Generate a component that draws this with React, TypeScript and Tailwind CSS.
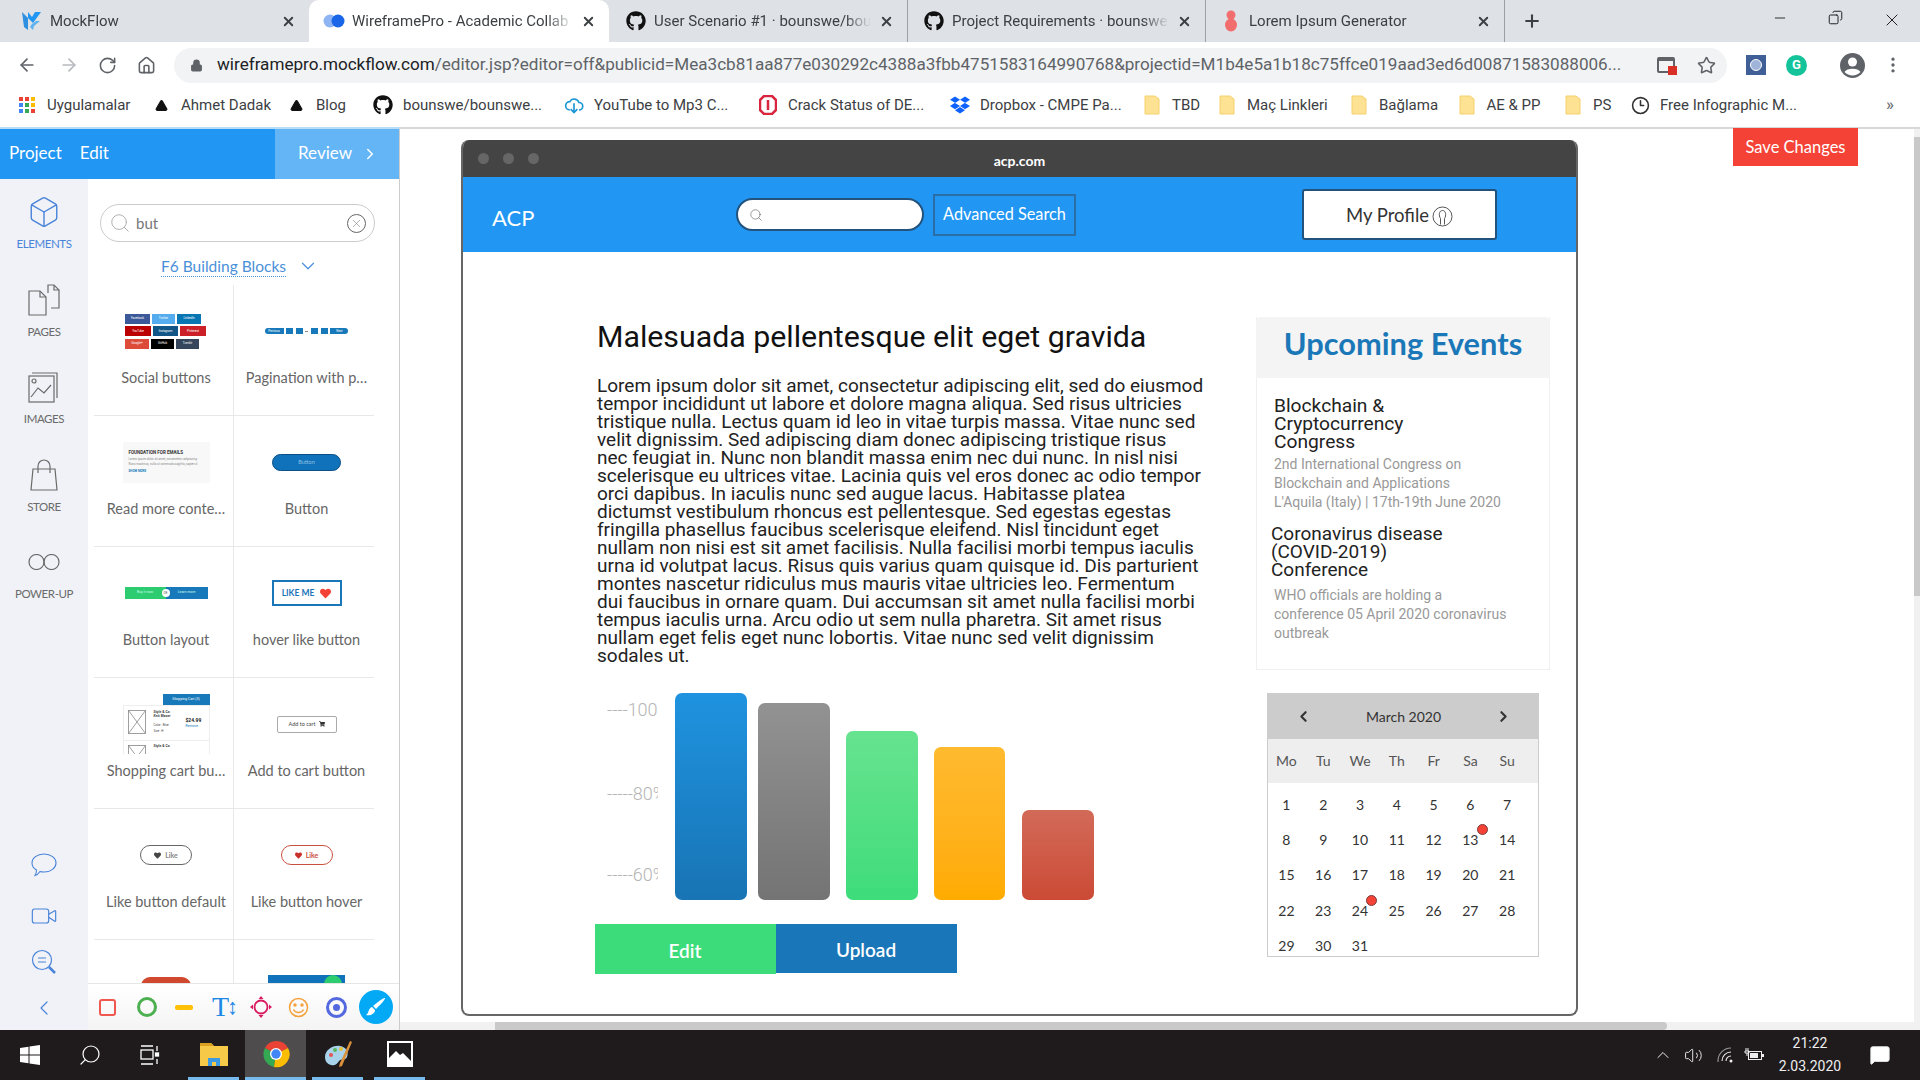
import { ReactNode } from "react";
import { FaGithub, FaDropbox, FaHeart, FaShoppingCart } from "react-icons/fa";
import {
  ArrowLeft, ArrowRight, RotateCw, Home, Lock, Star, X, Plus, Minus, ChevronRight, ChevronLeft,
  ChevronDown, ChevronUp, Search, Copy, MoreVertical, Box,
  Video, Triangle, Volume2, MessageSquare, Clock3,
} from "lucide-react";

const ui = "font-['Roboto',sans-serif]";
const soft = "font-['Lato',sans-serif]";

const LOREM = [
  "Lorem ipsum dolor sit amet, consectetur adipiscing elit, sed do eiusmod",
  "tempor incididunt ut labore et dolore magna aliqua. Sed risus ultricies",
  "tristique nulla. Lectus quam id leo in vitae turpis massa. Vitae nunc sed",
  "velit dignissim. Sed adipiscing diam donec adipiscing tristique risus",
  "nec feugiat in. Nunc non blandit massa enim nec dui nunc. In nisl nisi",
  "scelerisque eu ultrices vitae. Lacinia quis vel eros donec ac odio tempor",
  "orci dapibus. In iaculis nunc sed augue lacus. Habitasse platea",
  "dictumst vestibulum rhoncus est pellentesque. Sed egestas egestas",
  "fringilla phasellus faucibus scelerisque eleifend. Nisl tincidunt eget",
  "nullam non nisi est sit amet facilisis. Nulla facilisi morbi tempus iaculis",
  "urna id volutpat lacus. Risus quis varius quam quisque id. Dis parturient",
  "montes nascetur ridiculus mus mauris vitae ultricies leo. Fermentum",
  "dui faucibus in ornare quam. Dui accumsan sit amet nulla facilisi morbi",
  "tempus iaculis urna. Arcu odio ut sem nulla pharetra. Sit amet risus",
  "nullam eget felis eget nunc lobortis. Vitae nunc sed velit dignissim",
  "sodales ut.",
];

function MockFlowLogo() {
  return (
    <svg width="22" height="22" viewBox="0 0 22 22">
      <path d="M1 2l6 6 0 12-4-3z" fill="#2f8fe0" />
      <path d="M7 8l5 5 8-11h-6l-3 5-4-5z" fill="#2196f3" />
      <path d="M11 14l4-3h4l-6 5-1 4-3-3z" fill="#5db3f0" />
    </svg>
  );
}

function WireLogo() {
  return (
    <svg width="22" height="14" viewBox="0 0 22 14">
      <circle cx="7" cy="7" r="6.500" fill="#8fb4f4" />
      <circle cx="15" cy="7" r="6.500" fill="#1a66e8" />
    </svg>
  );
}

function LoremLogo() {
  return (
    <svg width="14" height="22" viewBox="0 0 14 22">
      <circle cx="7" cy="5" r="4.500" fill="#f26d6d" />
      <ellipse cx="7" cy="15" rx="6" ry="6.500" fill="#f26d6d" />
    </svg>
  );
}

function Tab({ icon, label, active, className }: { icon: ReactNode; label: string; active?: boolean; className: string }) {
  return (
    <div className={`relative flex h-full shrink-0 items-center pr-[13px] ${active ? "rounded-t-[10px] bg-white" : ""} ${className}`}>
      <span className="flex w-[30px] shrink-0 justify-center">{icon}</span>
      <span className="ml-[3px] min-w-0 flex-1 overflow-hidden text-[15px] whitespace-nowrap text-[#3c4043] [mask-image:linear-gradient(to_right,black_88%,transparent)]">{label}</span>
      <X size={15} strokeWidth={3} className="ml-[8px] shrink-0 text-[#3c4043]" />
    </div>
  );
}

function Folder() {
  return (
    <svg width="16" height="20" viewBox="0 0 16 20">
      <path d="M1 1h10l4 3v15H1z" fill="#fde293" stroke="#f5d06e" />
    </svg>
  );
}

function GridDots() {
  const colors = ["#ea4335", "#ea4335", "#fbbc04", "#4285f4", "#34a853", "#fbbc04", "#4285f4", "#34a853", "#ea4335"];
  return (
    <div className="grid grid-cols-3 gap-[2px]">
      {colors.map((c, i) => (
        <span key={i} className="h-[4px] w-[4px]" style={{ background: c }} />
      ))}
    </div>
  );
}

function Bookmark({ icon, label, className }: { icon: ReactNode; label: string; className: string }) {
  return (
    <div className={`flex shrink-0 items-center ${className}`}>
      <span className="flex w-[24px] shrink-0 justify-center">{icon}</span>
      <span className="ml-[8px] text-[15px] whitespace-nowrap text-[#3c4043]">{label}</span>
    </div>
  );
}

function AvatarIcon() {
  return (
    <svg width="27" height="27" viewBox="0 0 27 27">
      <circle cx="13.500" cy="13.500" r="12.500" fill="#5f6368" />
      <circle cx="13.500" cy="10" r="4.500" fill="#fff" />
      <path d="M5.500 20c2-4.500 14-4.500 16 0-4 4.500-12 4.500-16 0z" fill="#fff" />
    </svg>
  );
}

function BrowserChrome() {
  const tri = <Triangle size={13} fill="#111" stroke="#111" />;
  return (
    <div className={`h-[129px] shrink-0 ${ui}`}>
      <div className="flex h-[42px] items-end bg-[#dee1e6]">
        <div className="flex h-[42px] items-center">
          <Tab className="w-[309px] pl-[17px]" icon={<MockFlowLogo />} label="MockFlow" />
          <Tab active className="w-[300px] pl-[10px]" icon={<WireLogo />} label="WireframePro - Academic Collab" />
          <Tab className="w-[298px] pl-[12px]" icon={<FaGithub size={20} color="#111" />} label="User Scenario #1 · bounswe/boun" />
          <Tab className="w-[298px] border-l border-[#9aa0a6] pl-[11px]" icon={<FaGithub size={20} color="#111" />} label="Project Requirements · bounswe/" />
          <Tab className="w-[300px] border-x border-[#9aa0a6] pl-[10px]" icon={<LoremLogo />} label="Lorem Ipsum Generator" />
          <Plus size={20} strokeWidth={2.500} className="ml-[17px] text-[#3c4043]" />
        </div>
        <div className="ml-auto flex h-[42px] items-start pt-[10px] pr-[18px] text-[#222]">
          <Minus size={16} strokeWidth={1.400} />
          <Copy size={15} strokeWidth={1.600} className="ml-[40px] scale-x-[-1]" />
          <X size={20} strokeWidth={1.200} className="ml-[39px]" />
        </div>
      </div>

      <div className="flex h-[46px] items-center bg-white text-[#5f6368]">
        <ArrowLeft size={20} className="ml-[17px]" />
        <ArrowRight size={20} className="ml-[22px] text-[#b6b9bd]" />
        <RotateCw size={19} className="ml-[19px]" />
        <Home size={19} className="ml-[20px]" />
        <div className="ml-[18px] flex h-[35px] w-[1553px] items-center rounded-full bg-[#f1f3f4] pl-[16px]">
          <Lock size={13} fill="#5f6368" className="shrink-0" />
          <span className="ml-[14px] text-[17.100px] whitespace-nowrap text-[#5f6368]">
            <span className="text-[#202124]">wireframepro.mockflow.com</span>
            /editor.jsp?editor=off&amp;publicid=Mea3cb81aa877e030292c4388a3fbb4751583164990768&amp;projectid=M1b4e5a1b18c75ffce019aad3ed6d00871583088006...
          </span>
          <span className="ml-auto flex items-center pr-[11px]">
            <span className="relative mr-[22px] block h-[16px] w-[18px] rounded-[2px] border-2 border-t-[4px] border-[#5f6368]">
              <span className="absolute right-[-4px] bottom-[-4px] h-[9px] w-[9px] bg-[#d93025]" />
            </span>
            <Star size={19} />
          </span>
        </div>
        <span className="ml-[19px] flex h-[20px] w-[20px] items-center justify-center bg-[#3f5f96]">
          <span className="block h-[12px] w-[12px] rounded-full border border-white bg-[#9fb4d8]" />
        </span>
        <span className="ml-[20px] flex h-[21px] w-[21px] items-center justify-center rounded-full bg-[#15c39a] text-[13px] font-bold text-white">G</span>
        <span className="ml-[32px]"><AvatarIcon /></span>
        <MoreVertical size={20} className="ml-[17px]" />
      </div>

      <div className="relative flex h-[41px] items-center border-b-[2px] border-[#d8d8d8] bg-white pb-[5px] pl-[15px]">
        <Bookmark className="w-[134px]" icon={<GridDots />} label="Uygulamalar" />
        <Bookmark className="w-[135px]" icon={tri} label="Ahmet Dadak" />
        <Bookmark className="w-[87px]" icon={tri} label="Blog" />
        <Bookmark className="w-[191px]" icon={<FaGithub size={20} color="#111" />} label="bounswe/bounswe..." />
        <Bookmark className="w-[194px]" icon={<svg width="20" height="20" viewBox="0 0 24 24" fill="none" stroke="#1c96d6" strokeWidth="2"><path d="M7 18a5 5 0 0 1 0-10 6 6 0 0 1 11 1 4.500 4.500 0 0 1 0 9" /><path d="M12 10v11M8 17l4 4 4-4" /></svg>} label="YouTube to Mp3 C..." />
        <Bookmark className="w-[192px]" icon={<svg width="18" height="20" viewBox="0 0 18 20" fill="none" stroke="#d7263d" strokeWidth="2.500"><path d="M5 1h8l4 4v10l-4 4H5l-4-4V5z" /><path d="M9 5v10" /></svg>} label="Crack Status of DE..." />
        <Bookmark className="w-[192px]" icon={<FaDropbox size={20} color="#0d62ff" />} label="Dropbox - CMPE Pa..." />
        <Bookmark className="w-[75px]" icon={<Folder />} label="TBD" />
        <Bookmark className="w-[132px]" icon={<Folder />} label="Maç Linkleri" />
        <Bookmark className="w-[107.500px]" icon={<Folder />} label="Bağlama" />
        <Bookmark className="w-[106.500px]" icon={<Folder />} label="AE & PP" />
        <Bookmark className="w-[67px]" icon={<Folder />} label="PS" />
        <Bookmark className="w-[258px]" icon={<Clock3 size={19} color="#333" />} label="Free Infographic M..." />
        <span className="text-[17px] text-[#5f6368]">»</span>
        <span className="absolute bottom-[-2px] left-0 h-[2px] w-[400px] bg-[#b9dcf7]" />
      </div>
    </div>
  );
}

function RailItem({ icon, label, active }: { icon: ReactNode; label: string; active?: boolean }) {
  return (
    <div className={`flex h-[87.500px] flex-col items-center ${active ? "text-[#4a84d9]" : "text-[#6a6a6a]"}`}>
      <span className="flex h-[36px] items-center">{icon}</span>
      <span className={`mt-[5px] text-[11.500px] leading-[18px] tracking-[-0.400px] ${soft}`}>{label}</span>
    </div>
  );
}

function PagesIcon() {
  return (
    <svg width="32" height="32" viewBox="0 0 32 32" fill="none" stroke="#6a6a6a" strokeWidth="1.200">
      <path d="M20 9V1h6l5 5v18h-8" />
      <path d="M26 1v5h5" />
      <path d="M1 7h11l6 6v18H1z" />
      <path d="M12 7v6h6" />
    </svg>
  );
}

function ImagesIcon() {
  return (
    <svg width="32" height="32" viewBox="0 0 32 32" fill="none" stroke="#6a6a6a" strokeWidth="1.200">
      <path d="M4 2h25v25" />
      <rect x="1" y="5" width="25" height="26" />
      <circle cx="6" cy="10" r="2" />
      <path d="M3 26l7-9 6 5 7-8" />
    </svg>
  );
}

function StoreIcon() {
  return (
    <svg width="28" height="32" viewBox="0 0 28 32" fill="none" stroke="#6a6a6a" strokeWidth="1.200">
      <path d="M3 10h22l2 21H1z" />
      <path d="M8 14V7a6 6 0 0 1 12 0v7" />
    </svg>
  );
}

function CommentIcon() {
  return (
    <svg width="26" height="24" viewBox="0 0 26 24" fill="none" stroke="#4a84d9" strokeWidth="1.100">
      <path d="M13 1c7 0 12 4 12 9s-5 9-12 9c-1.500 0-3 0-4-.500-1 1.500-3 3.500-5 4 1-1.500 1.500-3.500 1.500-5.500C3 15.500 1 13 1 10c0-5 5-9 12-9z" />
    </svg>
  );
}

function Thumb({ children, label }: { children?: ReactNode; label?: string }) {
  return (
    <div className="flex h-[131px] flex-col items-center border-b border-[#e8e8e8] pt-[7px] pl-[5px] odd:border-r">
      <div className="flex h-[78px] w-full items-center justify-center">{children}</div>
      {label && <div className={`h-[16px] text-[14.500px] leading-[16px] whitespace-nowrap text-[#666] ${soft}`}>{label}</div>}
    </div>
  );
}

function SocialBtn({ label, className }: { label: string; className: string }) {
  return <span className={`flex h-[10px] items-center justify-center text-[3px] text-white ${className}`}>{label}</span>;
}

function ThumbSocial() {
  return (
    <div className={`flex w-[82px] flex-col gap-[2.500px] ${ui}`}>
      <div className="flex gap-[2px]">
        <SocialBtn className="w-[25px] bg-[#3b5998]" label="Facebook" />
        <SocialBtn className="w-[23px] bg-[#55acee]" label="Twitter" />
        <SocialBtn className="w-[24px] bg-[#0976b4]" label="LinkedIn" />
      </div>
      <div className="flex gap-[2px]">
        <SocialBtn className="w-[26px] bg-[#bb0000]" label="YouTube" />
        <SocialBtn className="w-[25px] bg-[#125688]" label="Instagram" />
        <SocialBtn className="w-[26px] bg-[#cb2027]" label="Pinterest" />
      </div>
      <div className="flex gap-[2px]">
        <SocialBtn className="w-[24px] bg-[#dd4b39]" label="Google+" />
        <SocialBtn className="w-[23px] bg-black" label="GitHub" />
        <SocialBtn className="w-[23px] bg-[#35465c]" label="Tumblr" />
      </div>
    </div>
  );
}

function ThumbPagination() {
  const seg = "h-[6px] w-[7px] bg-[#1779ba]";
  return (
    <div className={`flex w-[84px] items-center justify-between text-[3px] text-white ${ui}`}>
      <span className="flex h-[6px] w-[19px] items-center justify-center rounded-l-[3px] bg-[#1779ba]">Previous</span>
      <span className={seg} />
      <span className={seg} />
      <span className="h-[1px] w-[3px] bg-[#888]" />
      <span className={seg} />
      <span className={seg} />
      <span className="flex h-[6px] w-[18px] items-center justify-center rounded-r-[3px] bg-[#1779ba]">Next</span>
    </div>
  );
}

function ThumbReadMore() {
  return (
    <div className={`flex h-[41px] w-[87px] flex-col justify-center overflow-hidden bg-[#f8f8f8] px-[6px] ${ui}`}>
      <div className="text-[4.500px] leading-[6px] font-bold text-[#333]">FOUNDATION FOR EMAILS</div>
      <div className="mt-[1px] text-[3px] leading-[5px] whitespace-nowrap text-[#888]">Lorem ipsum dolor sit amet, consectetur adipiscing<br />Nunc maximus, nulla ut commodo sagittis, sapien d</div>
      <div className="mt-[2px] text-[3px] leading-[5px] font-bold text-[#1779ba]">SHOW MORE</div>
    </div>
  );
}

function ThumbButtonLayout() {
  return (
    <div className={`relative flex h-[12px] w-[83px] text-[3.500px] text-[#cfe] ${ui}`}>
      <span className="flex w-[41px] items-center justify-center bg-[#2ecc71]">Buy it now</span>
      <span className="flex flex-1 items-center justify-center bg-[#1779ba]">Learn more</span>
      <span className="absolute top-[2px] left-[37px] flex h-[8px] w-[8px] items-center justify-center rounded-full bg-white text-[3px] text-[#555]">OR</span>
    </div>
  );
}

function WireBox({ className }: { className: string }) {
  return (
    <svg className={`absolute ${className}`} width="18" height="24" viewBox="0 0 18 24" fill="none" stroke="#888" strokeWidth="0.800">
      <rect x="0.500" y="0.500" width="17" height="23" />
      <path d="M0.500 0.500l17 23M17.500 0.500l-17 23" />
    </svg>
  );
}

function ThumbCart() {
  return (
    <div className={`relative h-[60px] w-[87px] overflow-hidden ${ui}`}>
      <div className="absolute top-0 right-0 flex h-[11px] w-[47px] items-center justify-center bg-[#1779ba] text-[3.500px] text-white">Shopping Cart (3)</div>
      <div className="absolute top-[11px] left-0 h-[60px] w-full border border-[#eee]">
        <WireBox className="top-[4px] left-[4px]" />
        <div className="absolute top-[4px] left-[30px] text-[3.500px] leading-[4px] font-bold text-[#444]">Style &amp; Co<br />Knit Blazer</div>
        <div className="absolute top-[16px] left-[30px] text-[3px] leading-[6px] text-[#444]">Color : Blue<br />Size : H</div>
        <div className="absolute top-[11px] left-[62px] text-[5px] font-bold text-[#222]">$24.99</div>
        <div className="absolute top-[18px] left-[62px] text-[3.500px] text-[#1779ba]">Remove</div>
        <div className="absolute top-[34px] left-0 w-full border-t border-[#eee]" />
        <WireBox className="top-[39px] left-[4px]" />
        <div className="absolute top-[38px] left-[30px] text-[3.500px] font-bold text-[#444]">Style &amp; Co</div>
      </div>
    </div>
  );
}

function ThumbLike({ hover }: { hover?: boolean }) {
  return (
    <div className={`flex h-[20px] w-[52px] items-center justify-center gap-[4px] rounded-full border-[1.500px] ${hover ? "border-[#c9503f] text-[#c9503f]" : "border-[#666] text-[#888]"}`}>
      <FaHeart size={7} color={hover ? "#c9302c" : "#444"} />
      <span className={`text-[7px] font-bold ${soft}`}>Like</span>
    </div>
  );
}

function BottomTools() {
  return (
    <div className="flex h-[47px] shrink-0 items-center border-t border-[#e6e6e6] bg-gradient-to-b from-white to-[#f4f4f4] pl-[11px]">
      <span className="block h-[17px] w-[17px] rounded-[3px] border-2 border-[#f0574f]" />
      <span className="ml-[21px] block h-[20px] w-[20px] rounded-full border-[3px] border-[#4caf50]" />
      <span className="ml-[18px] block h-[5px] w-[18px] rounded-[2px] bg-[#ffc107]" />
      <span className="ml-[19px] flex w-[26px] items-center font-['Liberation_Serif',serif] text-[28px] leading-none text-[#1e88e5]">T<span className="-ml-[2px] text-[22px] font-light">↕</span></span>
      <svg className="ml-[12px]" width="22" height="22" viewBox="0 0 22 22" fill="none" stroke="#d81b60" strokeWidth="1.800">
        <circle cx="11" cy="11" r="6.500" />
        <path d="M11 0l2.500 3h-5zM11 22l2.500-3h-5zM0 11l3 2.500v-5zM22 11l-3 2.500v-5z" fill="#d81b60" stroke="none" />
      </svg>
      <svg className="ml-[16px]" width="21" height="21" viewBox="0 0 21 21" fill="none" stroke="#f5a13c" strokeWidth="1.500">
        <circle cx="10.500" cy="10.500" r="9" />
        <path d="M5.500 12.500c2 4 8 4 10 0" />
        <circle cx="7" cy="8" r="1" fill="#f5a13c" />
        <circle cx="14" cy="8" r="1" fill="#f5a13c" />
      </svg>
      <span className="ml-[17px] flex h-[21px] w-[21px] items-center justify-center rounded-full border-[3px] border-[#5468e0]">
        <span className="block h-[7px] w-[7px] rounded-full bg-[#5468e0]" />
      </span>
      <span className="ml-[12px] flex h-[34px] w-[34px] items-center justify-center rounded-full bg-[#03a9f4]">
        <svg width="22" height="22" viewBox="0 0 22 22" fill="#fff">
          <path d="M20 2c1 1-7 9-9 11l-3-3C10 8 19 1 20 2z" />
          <path d="M7 11l3 3c0 4-5 6-9 5 2-1 2-3 3-5 1-2 2-3 3-3z" />
        </svg>
      </span>
    </div>
  );
}

function LeftPanel() {
  return (
    <div className="flex w-[400px] shrink-0 flex-col border-r border-[#ccc]">
      <div className={`flex h-[50px] shrink-0 bg-[#2196f3] pb-0 text-white ${soft}`}>
        <div className="flex flex-1 items-center pb-[3px] pl-[9px] text-[17px]">
          <span>Project</span>
          <span className="ml-[18px]">Edit</span>
        </div>
        <div className="flex w-[124px] items-center bg-[#64b5f6] pb-[3px] pl-[23px] text-[17px]">
          <span>Review</span>
          <ChevronRight size={18} className="ml-[9px] mt-[3px]" />
        </div>
      </div>
      <div className="flex min-h-0 flex-1">
        <div className="flex w-[88px] shrink-0 flex-col bg-[#f0f2f7] pt-[15px]">
          <RailItem active label="ELEMENTS" icon={<Box size={34} strokeWidth={1} />} />
          <RailItem label="PAGES" icon={<PagesIcon />} />
          <RailItem label="IMAGES" icon={<ImagesIcon />} />
          <RailItem label="STORE" icon={<StoreIcon />} />
          <RailItem label="POWER-UP" icon={
            <svg width="32" height="16" viewBox="0 0 32 16" fill="none" stroke="#6a6a6a" strokeWidth="1.200">
              <circle cx="8.500" cy="8" r="7.500" />
              <circle cx="23.500" cy="8" r="7.500" />
            </svg>
          } />
          <div className="mt-auto flex flex-col items-center pb-[10px] text-[#4a84d9]">
            <span className="mb-[25px]"><CommentIcon /></span>
            <Video size={28} strokeWidth={1} className="mb-[19px]" />
            <svg className="mb-[21px]" width="26" height="26" viewBox="0 0 26 26" fill="none" stroke="#4a84d9" strokeWidth="1.200">
              <circle cx="11" cy="11" r="9.500" />
              <path d="M7 9h8M7 13h8" />
              <path d="M18 18l6 6" strokeWidth="2.500" />
            </svg>
            <ChevronLeft size={24} strokeWidth={1.200} />
          </div>
        </div>
        <div className="flex min-w-0 flex-1 flex-col">
          <div className={`ml-[12px] mt-[25px] flex h-[38px] w-[275px] shrink-0 items-center rounded-full border border-[#ccc] pr-[8px] pl-[8px] text-[#777] ${soft}`}>
            <Search size={22} strokeWidth={1} className="text-[#aaa]" />
            <span className="ml-[5px] text-[15px]">but</span>
            <span className="ml-auto flex h-[19px] w-[19px] items-center justify-center rounded-full border border-[#666]">
              <X size={13} strokeWidth={1} />
            </span>
          </div>
          <div className={`mt-[13px] ml-[73px] flex h-[22px] shrink-0 items-center text-[15.500px] text-[#4a90d9] ${soft}`}>
            <span className="border-b border-dotted border-[#4a90d9] leading-[20px]">F6 Building Blocks</span>
            <ChevronDown size={22} strokeWidth={1.300} className="ml-[11px]" />
          </div>
          <div className="mt-[8px] ml-[6px] w-[280px] min-h-0 flex-1 overflow-hidden">
            <div className="grid grid-cols-2">
              <Thumb label="Social buttons"><ThumbSocial /></Thumb>
              <Thumb label="Pagination with p…"><ThumbPagination /></Thumb>
              <Thumb label="Read more conte…"><ThumbReadMore /></Thumb>
              <Thumb label="Button">
                <span className={`flex h-[17px] w-[69px] items-center justify-center rounded-full border border-[#0a4f85] bg-[#0f72ba] text-[5.500px] text-[#8fc0e6] ${soft}`}>Button</span>
              </Thumb>
              <Thumb label="Button layout"><ThumbButtonLayout /></Thumb>
              <Thumb label="hover like button">
                <span className={`flex h-[26px] w-[70px] items-center justify-center gap-[6px] border-2 border-[#1976b8] text-[8.500px] font-bold text-[#1976b8] ${soft}`}>
                  LIKE ME <FaHeart size={11} color="#f44336" />
                </span>
              </Thumb>
              <Thumb label="Shopping cart bu…"><ThumbCart /></Thumb>
              <Thumb label="Add to cart button">
                <span className={`flex h-[17px] w-[60px] items-center justify-center gap-[3px] rounded-[2px] border-[1.500px] border-[#aaa] text-[5.500px] text-[#444] ${soft}`}>
                  Add to cart <FaShoppingCart size={6} color="#333" />
                </span>
              </Thumb>
              <Thumb label="Like button default"><ThumbLike /></Thumb>
              <Thumb label="Like button hover"><ThumbLike hover /></Thumb>
              <Thumb>
                <span className="block h-[18px] w-[50px] rounded-full bg-[#d0492e]" />
              </Thumb>
              <Thumb>
                <span className="flex h-[22px] w-[77px] justify-end bg-[#0f72ba] pr-[3px]">
                  <span className="block h-[18px] w-[18px] rounded-full bg-[#2ecc71]" />
                </span>
              </Thumb>
            </div>
          </div>
          <BottomTools />
        </div>
      </div>
    </div>
  );
}

function Bar({ className }: { className: string }) {
  return <div className={`w-[71.500px] rounded-[7px] bg-gradient-to-b ${className}`} />;
}

function Chart() {
  return (
    <div className={`mt-[28px] flex h-[207px] items-end ${ui}`}>
      <div className="ml-[10px] flex h-full w-[51px] flex-col overflow-hidden text-[18px] leading-[22px] font-light whitespace-nowrap text-[#b5b5b5]">
        <span className="mt-[6px]">----100</span>
        <span className="mt-[62px]">-----80%</span>
        <span className="mt-[59px]">-----60%</span>
      </div>
      <Bar className="ml-[17px] h-[207px] from-[#1f93e0] to-[#1874b4]" />
      <Bar className="ml-[11.500px] h-[197px] from-[#929292] to-[#747474]" />
      <Bar className="ml-[16.500px] h-[169px] from-[#66e38f] to-[#3ddc7a]" />
      <Bar className="ml-[16px] h-[153px] from-[#ffba2e] to-[#ffab00]" />
      <Bar className="ml-[17px] h-[90px] from-[#d26a58] to-[#cb4a35]" />
    </div>
  );
}

function Upcoming() {
  return (
    <div className={`mt-[65px] flex h-[353px] w-[294px] flex-col border-x border-b border-[#f0f0f0] ${ui}`}>
      <div className="-mx-px flex h-[61px] shrink-0 items-center justify-center rounded-t-[5px] bg-[#f4f4f4] pb-[6px]">
        <span className={`text-[30.800px] font-bold text-[#1b78b8] ${soft}`}>Upcoming Events</span>
      </div>
      <div className="pt-[19px] pl-[17px]">
        <div className="text-[19.200px] leading-[18px] text-[#222]">Blockchain &amp;<br />Cryptocurrency<br />Congress</div>
        <div className="mt-[4px] text-[14px] leading-[19px] text-[#999]">2nd International Congress on<br />Blockchain and Applications<br />L'Aquila (Italy) | 17th-19th June 2020</div>
        <div className="mt-[13px] -ml-[3px] text-[19px] leading-[18px] text-[#222]">Coronavirus disease<br />(COVID-2019)<br />Conference</div>
        <div className="mt-[7px] text-[14px] leading-[19px] text-[#999]">WHO officials are holding a<br />conference 05 April 2020 coronavirus<br />outbreak</div>
      </div>
    </div>
  );
}

function Calendar() {
  const days = Array.from({ length: 31 }, (_, i) => i + 1);
  return (
    <div className={`mt-[23px] ml-[11px] h-[264px] w-[272px] overflow-hidden border-[1.500px] border-[#ccc] text-[14px] text-[#333] ${soft}`}>
      <div className="flex h-[45px] items-center justify-between bg-[#ccc] pr-[26px] pl-[27px]">
        <ChevronLeft size={17} strokeWidth={3} />
        <span>March 2020</span>
        <ChevronRight size={17} strokeWidth={3} />
      </div>
      <div className="grid h-[44px] grid-cols-[repeat(7,36.800px)] items-center bg-[#eee] pb-[2px] text-center text-[#555]">
        {["Mo", "Tu", "We", "Th", "Fr", "Sa", "Su"].map((d) => (
          <span key={d}>{d}</span>
        ))}
      </div>
      <div className="grid grid-cols-[repeat(7,36.800px)] pt-[4px]">
        {days.map((d) => (
          <span key={d} className="relative flex h-[35.200px] items-center justify-center">
            {d}
            {(d === 13 || d === 24) && (
              <span className="absolute top-[2px] right-[1px] h-[11px] w-[11px] rounded-full border border-[#7b3b3b] bg-[#f44336]" />
            )}
          </span>
        ))}
      </div>
    </div>
  );
}

function WireWindow() {
  return (
    <div className="h-[876px] w-[1117px] overflow-hidden rounded-[8px] border-2 border-t-0 border-[#666]">
      <div className={`relative flex h-[37px] items-center bg-[#444] pl-[15px] ${soft}`}>
        <span className="block h-[11px] w-[11px] rounded-full bg-[#666]" />
        <span className="ml-[14px] block h-[11px] w-[11px] rounded-full bg-[#666]" />
        <span className="ml-[14px] block h-[11px] w-[11px] rounded-full bg-[#666]" />
        <span className="absolute left-0 right-0 top-[10px] text-center text-[14px] font-bold text-white">acp.com</span>
      </div>
      <div className={`flex h-[75px] items-center bg-[#2196f3] pl-[29px] ${soft}`}>
        <span className="mt-[6px] w-[244px] text-[22px] text-white">ACP</span>
        <div className="flex h-[33px] w-[188px] items-center rounded-full border-2 border-[#23527c] bg-white pl-[11px]">
          <Search size={14} strokeWidth={1} className="text-[#555]" />
        </div>
        <span className="ml-[9px] flex h-[42px] w-[143px] items-center justify-center border-2 border-[#2a6ea8] text-[16.300px] text-white">Advanced Search</span>
        <span className="ml-[226px] flex h-[51px] w-[195px] items-center justify-center gap-[3px] rounded-[3px] border-2 border-[#23527c] bg-white pt-[3px] text-[18.500px] text-[#333]">
          My Profile
          <svg width="21" height="21" viewBox="0 0 21 21" fill="none" stroke="#444" strokeWidth="0.900">
            <circle cx="10.500" cy="10.500" r="9.500" />
            <path d="M8.500 18.500v-6c-2-3-1.500-8 2-8s4 5 2 8v6" />
          </svg>
        </span>
      </div>
      <div className="flex">
        <div className="ml-[134px] w-[659px] shrink-0">
          <h1 className={`mt-[65px] h-[40px] text-[30.300px] leading-[40px] font-normal text-[#111] ${ui}`}>Malesuada pellentesque elit eget gravida</h1>
          <div className={`mt-[20px] text-[19px] leading-[18px] whitespace-nowrap text-[#222] ${ui}`}>
            {LOREM.map((line) => (
              <div key={line}>{line}</div>
            ))}
          </div>
          <Chart />
          <div className={`mt-[24px] -ml-[2.500px] flex items-start text-[19px] font-semibold text-white ${soft}`}>
            <span className="flex h-[50px] w-[181px] items-center justify-center bg-[#3ddc7a] pt-[4px]">Edit</span>
            <span className="flex h-[49px] w-[181px] items-center justify-center bg-[#1976b8] pt-[4px]">Upload</span>
          </div>
        </div>
        <div>
          <Upcoming />
          <Calendar />
        </div>
      </div>
    </div>
  );
}

function Canvas() {
  return (
    <div className="relative flex min-w-0 flex-1">
      <div className="flex min-w-0 flex-1 flex-col">
        <div className="min-h-0 flex-1 overflow-hidden pt-[11px] pl-[61px]">
          <WireWindow />
        </div>
        <div className="h-[8px] shrink-0 bg-[#f1f1f1]">
          <div className="ml-[95px] h-full w-[1172px] rounded-r-[4px] bg-[#c9c9c9]" />
        </div>
      </div>
      <div className="w-[6px] shrink-0 bg-[#f1f1f1] pt-[8px]">
        <div className="h-[459px] w-full bg-[#c9c9c9]" />
      </div>
      <button className={`absolute top-[-1px] left-[1333px] flex h-[38px] w-[125px] items-center justify-center bg-[#f44336] text-[16.500px] text-white ${soft}`}>Save Changes</button>
    </div>
  );
}

function ExplorerIcon() {
  return (
    <svg width="30" height="26" viewBox="0 0 30 26">
      <path d="M1 2h11l3 3h14v20H1z" fill="#f7c948" />
      <path d="M1 2h11l3 3H1z" fill="#d9a021" />
      <path d="M9 25v-8h12v8h-4v-4h-4v4z" fill="#3d9ae0" />
    </svg>
  );
}

function ChromeIcon() {
  return (
    <svg width="28" height="28" viewBox="0 0 28 28">
      <path d="M14 14L3 8a13 13 0 0 1 23 0z" fill="#ea4335" />
      <path d="M14 14L3 8a13 13 0 0 0 9 19z" fill="#34a853" />
      <path d="M14 14l12-6a13 13 0 0 1-14 19z" fill="#fbbc04" />
      <circle cx="14" cy="14" r="6" fill="#fff" />
      <circle cx="14" cy="14" r="4.700" fill="#4285f4" />
    </svg>
  );
}

function PaintIcon() {
  return (
    <svg width="30" height="28" viewBox="0 0 30 28">
      <path d="M2 17c0-7 8-12 15-11 6 1 9 6 7 11-2 4-6 1-8 4-2 3-4 5-8 4-4-1-6-4-6-8z" fill="#a8d3ea" />
      <circle cx="8" cy="15" r="2" fill="#e25555" />
      <circle cx="12" cy="10" r="2" fill="#5db75d" />
      <circle cx="18" cy="9" r="2" fill="#e8c23c" />
      <path d="M27 1l2 1-10 24-3 1 1-4z" fill="#d9913c" />
    </svg>
  );
}

function PhotosIcon() {
  return (
    <svg width="26" height="26" viewBox="0 0 26 26">
      <rect x="1" y="1" width="24" height="24" fill="#1f1c1e" stroke="#fff" strokeWidth="2" />
      <path d="M2 24V17l7-7 4 4 3-2 8 8v4z" fill="#fff" />
    </svg>
  );
}

function WindowsLogo() {
  return (
    <svg width="20" height="20" viewBox="0 0 20 20" fill="#fff">
      <path d="M0 3l8.500-1.200v7.700H0zM9.500 1.600L20 0v9.500H9.500zM0 10.500h8.500v7.700L0 17zM9.500 10.500H20V20L9.500 18.400z" />
    </svg>
  );
}

function WifiIcon() {
  return (
    <svg width="18" height="18" viewBox="0 0 18 18" fill="none" stroke="#eee" strokeWidth="1.100">
      <circle cx="15" cy="15" r="1.500" fill="#eee" stroke="none" />
      <path d="M10 15a5 5 0 0 1 5-5" />
      <path d="M6 15a9 9 0 0 1 9-9" />
      <path d="M2 16a13 13 0 0 1 13-14" stroke="#999" />
    </svg>
  );
}

function BatteryIcon() {
  return (
    <svg width="20" height="14" viewBox="0 0 20 14" fill="none" stroke="#eee" strokeWidth="1">
      <rect x="4.500" y="3.500" width="13" height="8" />
      <rect x="6" y="5" width="8" height="5" fill="#eee" stroke="none" />
      <rect x="18" y="6" width="2" height="3" fill="#eee" stroke="none" />
      <path d="M2 0v3M4 0v3M1 3h4v2H1zM3 5v3" />
    </svg>
  );
}

function TaskSlot({ children, className }: { children: ReactNode; className: string }) {
  return (
    <div className={`relative flex h-full items-center justify-center border-b-[3px] border-[#76b9ed] ${className}`}>{children}</div>
  );
}

function Taskbar() {
  return (
    <div className={`flex h-[50px] shrink-0 items-center bg-[#1f1b1d] text-white ${ui}`}>
      <span className="flex w-[60px] justify-center"><WindowsLogo /></span>
      <span className="flex w-[60px] justify-center"><Search size={24} strokeWidth={1.200} className="scale-x-[-1]" /></span>
      <span className="flex w-[60px] justify-center">
        <svg width="20" height="20" viewBox="0 0 20 20" fill="none" stroke="#fff" strokeWidth="1.300">
          <rect x="1" y="5" width="12" height="9" />
          <path d="M1 1h12M1 19h12M17 1v5M17 14v5" />
          <rect x="15.500" y="8" width="3" height="3" fill="#fff" />
        </svg>
      </span>
      <TaskSlot className="ml-[8px] w-[51px]"><ExplorerIcon /></TaskSlot>
      <TaskSlot className="ml-[6px] w-[61px] bg-[#4f4c4d]"><ChromeIcon /></TaskSlot>
      <TaskSlot className="ml-[6px] w-[51px]"><PaintIcon /></TaskSlot>
      <TaskSlot className="ml-[11px] w-[51px]"><PhotosIcon /></TaskSlot>
      <div className="ml-auto flex h-full items-center text-[#eee]">
        <ChevronUp size={20} strokeWidth={1.200} />
        <Volume2 size={19} strokeWidth={1.200} className="ml-[11px]" />
        <span className="ml-[13px]"><WifiIcon /></span>
        <span className="ml-[10px]"><BatteryIcon /></span>
        <div className="ml-[10px] flex w-[72px] flex-col items-center text-[14px] leading-[23px]">
          <span>21:22</span>
          <span>2.03.2020</span>
        </div>
        <MessageSquare size={22} fill="#fff" strokeWidth={1} className="mr-[29px] ml-[23px]" />
      </div>
    </div>
  );
}

export default function App() {
  return (
    <div className="flex h-[1080px] w-[1920px] flex-col overflow-hidden bg-white">
      <BrowserChrome />
      <div className="flex min-h-0 flex-1">
        <LeftPanel />
        <Canvas />
      </div>
      <Taskbar />
    </div>
  );
}
